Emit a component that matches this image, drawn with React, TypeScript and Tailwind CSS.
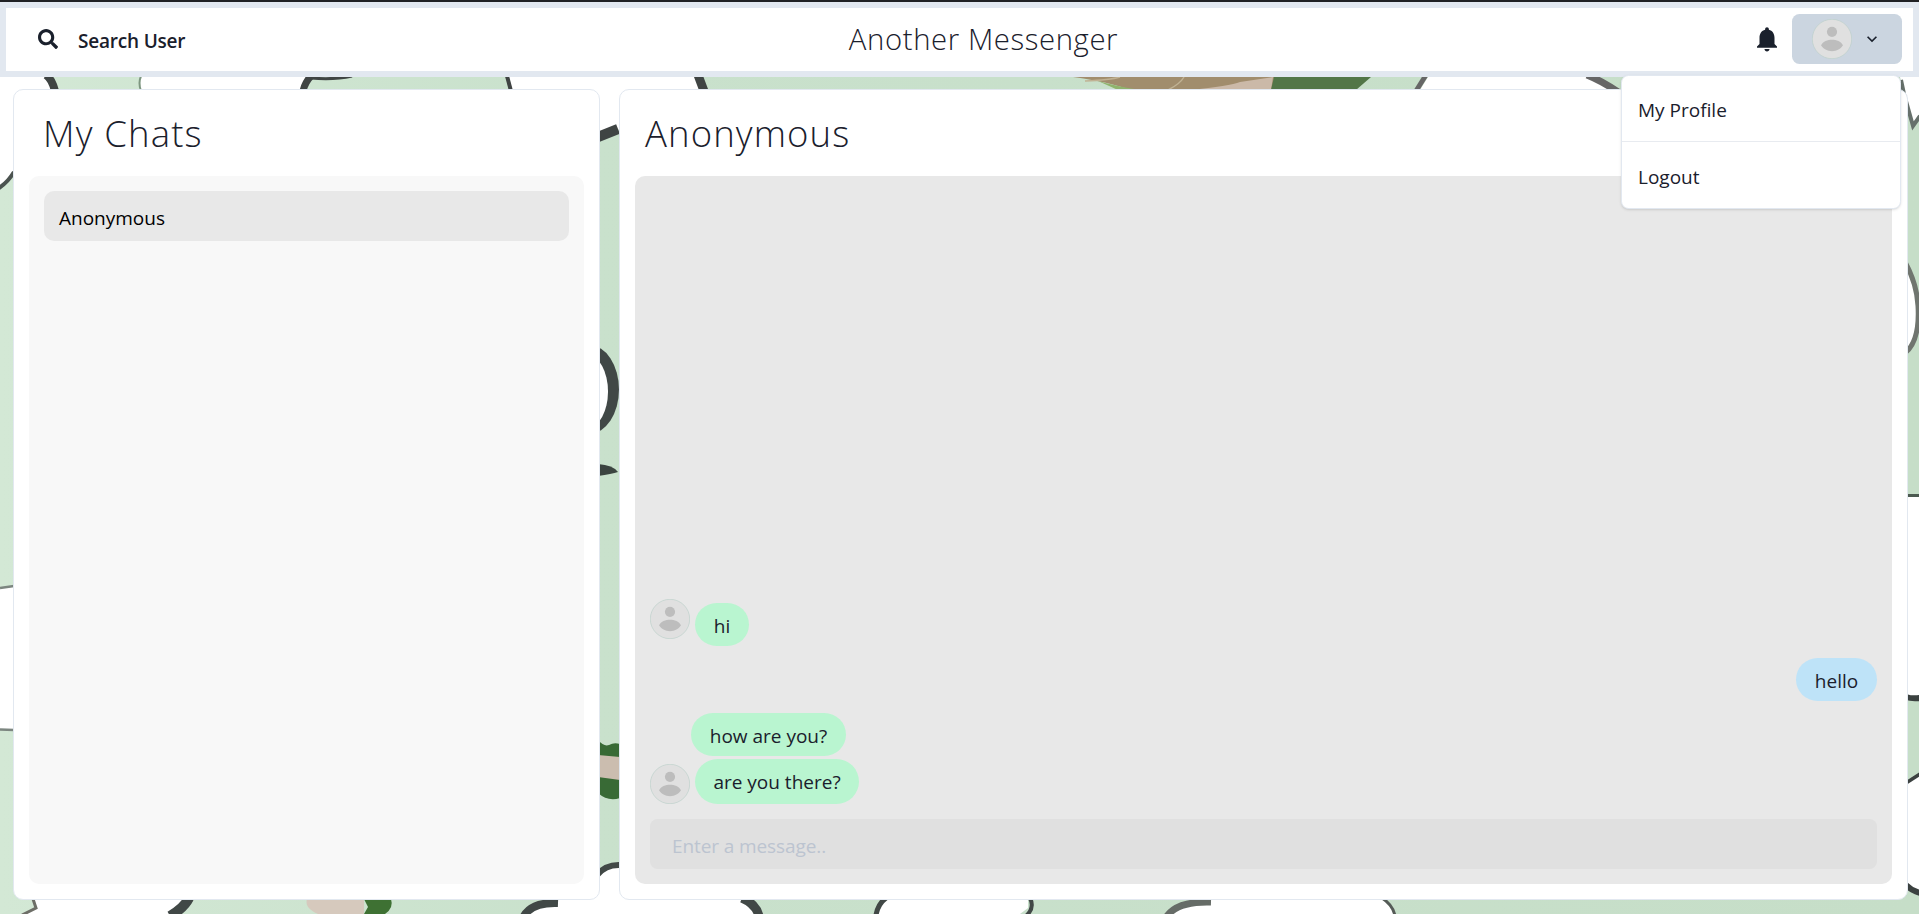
import React from "react";
import { FaSearch } from "react-icons/fa";

function Avatar() {
  return (
    <svg viewBox="0 0 40 40" className="size-10 shrink-0">
      <circle cx="20" cy="20" r="19.7" fill="#e0e0e0" stroke="#b9cfc8" strokeWidth="0.6" />
      <circle cx="20" cy="12.8" r="5.1" fill="#bdbdbd" />
      <path d="M9 26.3C11 22.5 15.5 20.8 20 20.8s9 1.7 11 5.5C28.800 30 24.500 32.200 20 32.200S11.200 30 9 26.300Z" fill="#bdbdbd" />
    </svg>
  );
}

function Wallpaper() {
  return (
    <svg viewBox="0 0 1919 914" className="h-[914px] w-[1919px]">
      <defs>
        <linearGradient id="mint" x1="0" x2="1" y1="0" y2="0">
          <stop offset="0" stopColor="#d3e8d5" />
          <stop offset="0.3" stopColor="#c9e1cc" />
          <stop offset="1" stopColor="#c6dec8" />
        </linearGradient>
      </defs>
      <rect width="1919" height="914" fill="url(#mint)" />

      {/* upper edge */}
      <g fill="#fff">
        <path d="M0 77H46L56 100H14V172Q8 182 0 187Z" />
        <path d="M140 77H311L302 90H141Q138 84 140 77Z" />
        <path d="M508 77H699L704 100H620V129L600 137V100H512Z" />
        <path d="M1428 77H1590L1620 90H1420Z" />
        <path d="M1900 77H1919V116L1913 126L1906 100Z" />
      </g>
      <path d="M512 88H530V102H512Z" fill="#fff" />
      <g fill="none" stroke="#3f4443">
        <path d="M46 75Q52 79 55 91" strokeWidth="8" />
        <path d="M141 76Q138 83 141 91" stroke="#7d9680" strokeWidth="2" />
        <path d="M312 75Q305 82 303 91" strokeWidth="7" />
        <path d="M311 78Q334 80 352 76" strokeWidth="3" />
        <path d="M507 76L511 91" strokeWidth="4" />
        <path d="M698 75L704 91" strokeWidth="9" />
        <path d="M1416 91L1426 75" stroke="#666" strokeWidth="5" />
        <path d="M1587 75Q1602 81 1618 92" stroke="#666" strokeWidth="7" />
        <path d="M1901 80L1904 94L1913 126L1920 116" stroke="#66706b" strokeWidth="4" />
        <path d="M-1 188Q8 182 14 172" stroke="#4b5350" strokeWidth="4" />
        <path d="M598 137L618 129" strokeWidth="10" />
      </g>
      <path d="M1073 77H1275L1272 90H1130Q1110 82 1073 77Z" fill="#a18d6d" />
      <path d="M1190 90Q1230 86 1240 82L1273 77L1271 90Z" fill="#cbb9a8" />
      <path d="M1085 81Q1110 80 1120 77M1168 90Q1180 84 1184 77" stroke="#c0b294" strokeWidth="1.5" fill="none" />
      <path d="M1098 81Q1115 86 1140 90H1118Z" fill="#8fb36c" />
      <path d="M1274 77H1371L1356 90H1271Z" fill="#527647" />

      {/* left edge */}
      <path d="M0 588L14 586V730H0Z" fill="#fff" />
      <path d="M0 588L14 586M0 729.500L14 730" stroke="#7c8680" strokeWidth="2.500" />

      {/* between the panels */}
      <ellipse cx="590" cy="389.500" rx="29" ry="44" fill="#414846" />
      <ellipse cx="588" cy="391.500" rx="20" ry="36" fill="#fff" />
      <path d="M598 464Q613 465 618 472Q612 474 598 476Z" fill="#3b4440" />
      <path d="M598 740Q604 747 609 745Q614 742 620 744V798Q608 802 598 793Z" fill="#386a35" />
      <path d="M598 755L620 757V780L598 777Z" fill="#cbbdaf" />
      <path d="M598 874Q606 863 620 865V899H598Z" fill="#fff" />
      <path d="M597 875Q606 864 621 865" fill="none" stroke="#414846" strokeWidth="6" />

      {/* right edge */}
      <path d="M1907 266Q1916 284 1916 306Q1918 338 1907 350Z" fill="#fff" />
      <path d="M1905 262Q1917 284 1918 306Q1920 341 1905 353" fill="none" stroke="#70756f" strokeWidth="5" />
      <path d="M1907 496H1919V696H1907Z" fill="#fff" />
      <path d="M1907 495.500H1919" stroke="#4c5a50" strokeWidth="3" />
      <path d="M1906 697Q1912 699 1920 698" stroke="#3b4140" strokeWidth="6" fill="none" />
      <path d="M1907 783L1919 775V894L1907 885Z" fill="#fff" />
      <path d="M1906 783L1920 774" stroke="#3b4140" strokeWidth="3.500" />
      <path d="M1906 885Q1912 891 1920 893" stroke="#3b4140" strokeWidth="6" fill="none" />

      {/* lower edge */}
      <g fill="#fff">
        <path d="M34 894H190L174 914H24L36 909Z" />
        <path d="M528 914Q538 902 558 894H742L758 914Z" />
        <path d="M886 894H1028V908L1020 914H878Z" />
        <path d="M1170 914Q1185 902 1210 899H1383L1396 914Z" />
      </g>
      <g fill="none" stroke="#414846">
        <path d="M33 899L36 908L22 915" stroke="#6d6e67" strokeWidth="3" />
        <path d="M189 898Q184 908 170 916" strokeWidth="10" />
        <path d="M524 916Q532 902 558 903" strokeWidth="8" />
        <path d="M742 898Q756 904 759 916" strokeWidth="9" />
        <path d="M886 898Q878 904 876 915" strokeWidth="5" />
        <path d="M1030 898Q1035 908 1026 916" strokeWidth="4" />
        <path d="M1167 916Q1178 901 1211 902" stroke="#666c67" strokeWidth="7" />
        <path d="M1382 898Q1393 905 1395 916" stroke="#555b57" strokeWidth="3" />
      </g>
      <path d="M307 899H364V914H318Q304 908 307 899Z" fill="#d6c9bd" />
      <path d="M364 899H391Q394 908 385 914H364L368 907Z" fill="#3e7133" />
    </svg>
  );
}

function Header() {
  return (
    <header className="flex h-[75px] items-center justify-between border-6 border-[#e2e8f0] bg-white pr-[11px] pl-[32px]">
      <button className="flex w-[300px] items-center gap-[20px] font-semibold">
        <FaSearch className="-mt-[2px] size-[20px]" />
        <span className="pt-[2px] tracking-[-0.2px]">Search User</span>
      </button>
      <h1 className="ml-[27px] text-[29.3px] leading-[45px] font-light tracking-[0.6px]">Another Messenger</h1>
      <div className="flex w-[300px] items-center justify-end pb-[2px]">
        <svg viewBox="0 0 24 24" className="mr-[10px] size-[30px] fill-[#1a202c]">
          <path d="M12 22c1.100 0 2-.9 2-2h-4c0 1.100.89 2 2 2zm6-6v-5c0-3.070-1.640-5.640-4.500-6.320V4c0-.83-.67-1.500-1.500-1.500s-1.500.67-1.500 1.500v.68C7.630 5.360 6 7.920 6 11v5l-2 2v1h16v-1l-2-2z" />
        </svg>
        <button className="flex h-[50px] w-[110px] items-center rounded-[7.5px] bg-[#cbd5e0] pl-5">
          <Avatar />
          <svg viewBox="0 0 24 24" className="ml-[10px] size-5">
            <path fill="#1a202c" d="M16.590 8.590L12 13.170 7.410 8.590 6 10l6 6 6-6z" />
          </svg>
        </button>
      </div>
    </header>
  );
}

function ProfileMenu() {
  return (
    <div className="absolute top-[73px] left-[1621px] z-10 flex h-[134px] w-[280px] flex-col rounded-[7.5px] border border-[#e2e8f0] bg-white shadow-sm">
      <a className="flex h-[66px] items-center border-b border-[#e8ebf0] px-4 pt-[3px]">My Profile</a>
      <a className="flex h-[66px] items-center px-4 pt-[4px]">Logout</a>
    </div>
  );
}

function MyChats() {
  return (
    <aside className="flex w-[587px] flex-col rounded-[10px] border border-[#e2e8f0] bg-white px-[15px] pb-[15px]">
      <h2 className="h-[86px] pt-[15px] pl-[14px] text-[36.5px] leading-[56px] font-light tracking-[1.15px]">My Chats</h2>
      <div className="flex-1 rounded-[10px] bg-[#f8f8f8] p-[15px]">
        <div className="flex h-[50px] items-center rounded-[10px] bg-[#e8e8e8] px-[15px] pt-[3px] text-black">Anonymous</div>
      </div>
    </aside>
  );
}

function ChatBox() {
  return (
    <main className="flex w-[1289px] flex-col rounded-[10px] border border-[#e2e8f0] bg-white px-[15px] pb-[15px]">
      <h2 className="h-[86px] pt-[15px] pl-[10px] text-[36.5px] leading-[56px] font-light tracking-[1.1px]">Anonymous</h2>
      <div className="flex flex-1 flex-col justify-end rounded-[10px] bg-[#e8e8e8] p-[15px]">
        <div className="flex h-[47px] items-start gap-[5px]">
          <Avatar />
          <span className="mt-[4px] h-[43px] w-[54px] rounded-[25px] bg-[#b9f5d0] pt-[8px] text-center leading-[30px]">hi</span>
        </div>
        <div className="mt-[12px] flex justify-end">
          <span className="h-[43px] w-[81px] rounded-[25px] bg-[#bee3f8] pt-[8px] text-center leading-[30px]">hello</span>
        </div>
        <div className="mt-[12px] flex pl-[41px]">
          <span className="h-[43px] w-[155px] rounded-[25px] bg-[#b9f5d0] pt-[8px] text-center leading-[30px]">how are you?</span>
        </div>
        <div className="mt-[3px] flex items-end gap-[5px]">
          <Avatar />
          <span className="h-[45px] w-[164px] rounded-[25px] bg-[#b9f5d0] pt-[8px] text-center leading-[30px]">are you there?</span>
        </div>
        <input
          placeholder="Enter a message.."
          className="mt-[15px] h-[50px] w-full rounded-[7.5px] bg-[#e0e0e0] px-[22px] pt-[3px] tracking-[-0.1px] outline-none placeholder:text-[#bcc4d0]"
        />
      </div>
    </main>
  );
}

export default function App() {
  return (
    <div className="relative isolate h-[914px] w-[1919px] overflow-hidden border-t-2 border-[#202124] bg-white font-['Open_Sans','Noto_Sans',sans-serif] text-[19px] leading-[30px] text-[#1a202c]">
      <div className="absolute inset-x-0 -top-[2px] -z-10 h-[914px]">
        <Wallpaper />
      </div>
      <Header />
      <ProfileMenu />
      <div className="flex h-[837px] justify-between pt-[12px] pr-[11px] pb-[14px] pl-[13px]">
        <MyChats />
        <ChatBox />
      </div>
    </div>
  );
}
